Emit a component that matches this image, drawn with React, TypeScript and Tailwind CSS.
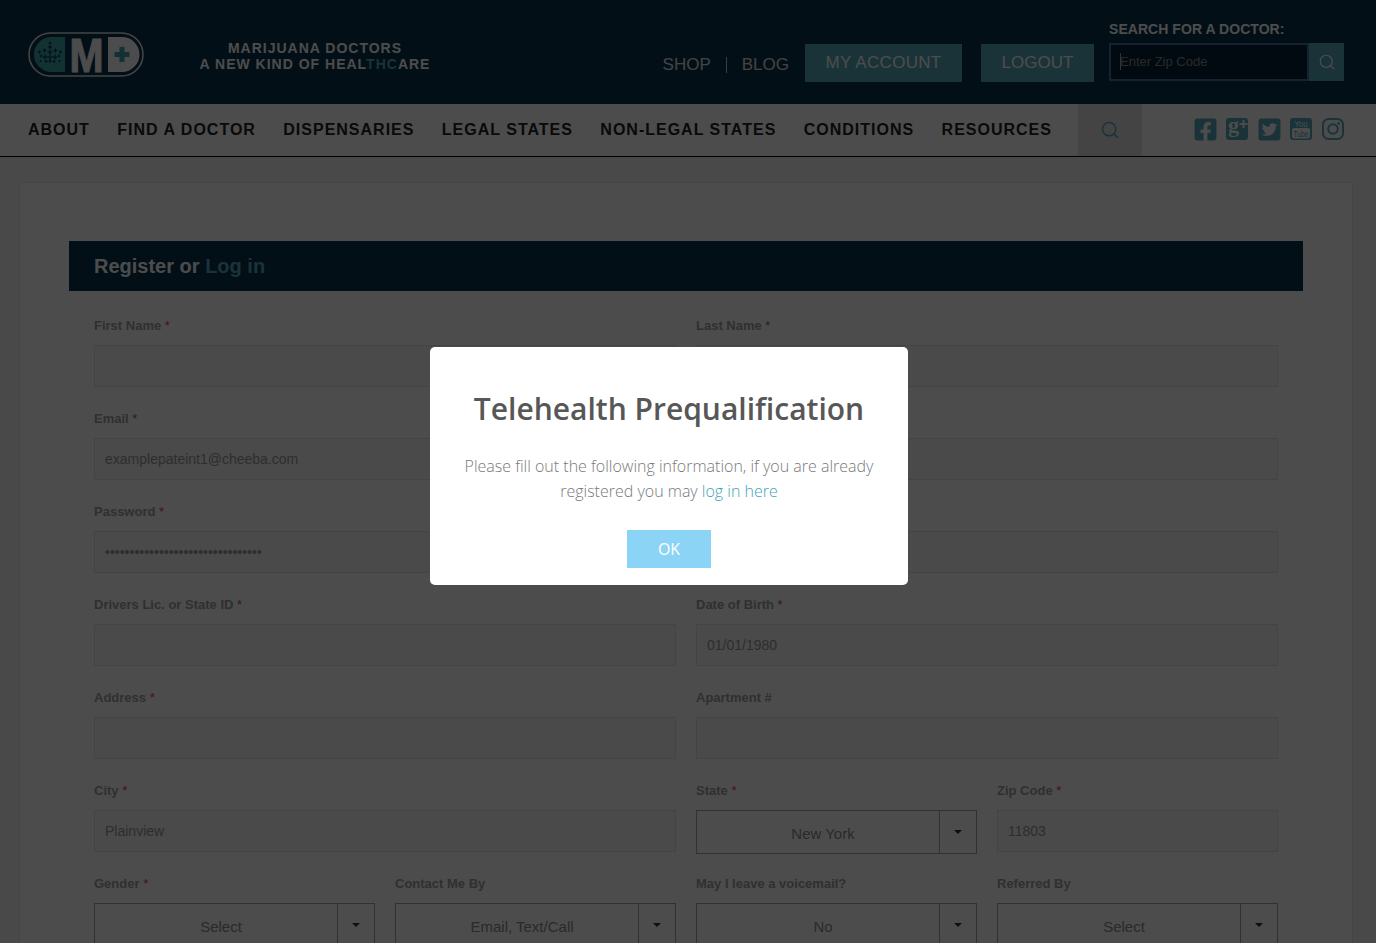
import React from 'react';
import { FaFacebookSquare, FaTwitterSquare } from 'react-icons/fa';
import { Search } from 'lucide-react';

const navItems = ['ABOUT', 'FIND A DOCTOR', 'DISPENSARIES', 'LEGAL STATES', 'NON-LEGAL STATES', 'CONDITIONS', 'RESOURCES'];

// little crosses that make up the leaf in the logo
const leafMarks = [
    [22, 11, 1.5], [22, 15, 2], [22, 20, 2.5], [22, 25, 3], [22, 29, 1.5],
    [16.5, 18.5, 2], [27.5, 18.5, 2], [17, 25, 2.5], [27, 25, 2.5],
    [11.5, 20, 1.5], [32.5, 20, 1.5], [13, 24, 1.5], [31, 24, 1.5],
    [12.5, 29, 1], [18, 29.5, 1.5], [26, 29.5, 1.5], [31.5, 29, 1],
];

const Logo = () => (
    <svg width="116" height="45" viewBox="0 0 116 45" className="shrink-0">
        <rect x="1" y="1" width="114" height="43" rx="21.5" fill="none" stroke="#e6e6e6" strokeWidth="1.6" />
        <path d="M37 5H23.5a17.5 17.5 0 0 0 0 35H37z" fill="#3fa3a8" />
        <g stroke="#07324d" strokeWidth="1.1" fill="none">
            {leafMarks.map(([x, y, r]) => (
                <path key={`${x}-${y}`} d={`M${x - r} ${y}h${r * 2}M${x} ${y - r}v${r * 2}`} />
            ))}
        </g>
        <text x="58.5" y="40" textAnchor="middle" fontFamily="'Liberation Sans', sans-serif" fontWeight="700" fontSize="49" textLength="34" lengthAdjust="spacingAndGlyphs" fill="#ffffff" stroke="#ffffff" strokeWidth="1.2">M</text>
        <path d="M80 5h14a17.5 17.5 0 0 1 0 35H80z" fill="#ffffff" />
        <path d="M94 15v15M86.5 22.5h15" stroke="#3fa3a8" strokeWidth="5" />
    </svg>
);

const GooglePlusIcon = () => (
    <svg width="22" height="22" viewBox="0 0 22 22">
        <rect width="22" height="22" rx="3" fill="#57aabe" />
        <text x="7.5" y="14" textAnchor="middle" fontFamily="'Liberation Serif', serif" fontWeight="700" fontSize="22" fill="#ffffff">g</text>
        <path d="M17.5 2v8M13.5 6h8" stroke="#ffffff" strokeWidth="1.8" />
    </svg>
);

const YoutubeIcon = () => (
    <svg width="22" height="22" viewBox="0 0 22 22">
        <rect width="22" height="22" rx="3" fill="#57aabe" />
        <text x="11" y="8.5" textAnchor="middle" fontFamily="'Liberation Sans', sans-serif" fontSize="9" textLength="13" lengthAdjust="spacingAndGlyphs" fill="#ffffff">You</text>
        <rect x="2" y="10" width="18" height="10.5" rx="2" fill="#ffffff" />
        <text x="11" y="18.5" textAnchor="middle" fontFamily="'Liberation Sans', sans-serif" fontSize="9.5" textLength="15" lengthAdjust="spacingAndGlyphs" fill="#57aabe">Tube</text>
    </svg>
);

const InstagramIcon = () => (
    <svg width="22" height="22" viewBox="0 0 22 22" fill="none" stroke="#57aabe" strokeWidth="2">
        <rect x="1" y="1" width="20" height="20" rx="5.5" />
        <circle cx="11" cy="11" r="4.8" />
        <circle cx="16.6" cy="5.4" r="1.3" fill="#57aabe" stroke="none" />
    </svg>
);

const Label = ({ text, required }: { text?: string; required?: boolean }) => (
    <label className="block h-[20px] text-[13px] leading-[22px] font-bold text-[#a0a0a0] whitespace-nowrap">
        {text}
        {required && <span className="text-[#d04a4a] font-normal"> *</span>}
    </label>
);

const Field = ({ label, required, value, span }: { label?: string; required?: boolean; value?: string; span?: boolean }) => (
    <div className={span ? 'col-span-2' : ''}>
        <Label text={label} required={required} />
        <input
            readOnly
            value={value ?? ''}
            className="mt-[10px] block w-full h-[42px] px-[10px] bg-[#f7f7f7] border border-[#e4e4e4] text-[14px] text-[#999999] outline-none"
        />
    </div>
);

const SelectField = ({ label, required, value }: { label: string; required?: boolean; value: string }) => (
    <div>
        <Label text={label} required={required} />
        <div className="mt-[10px] -mb-[2px] flex h-[44px] border border-[#a6a6a6] text-[15px] text-[#8c8c8c]">
            <div className="flex-1 flex items-center justify-center pl-[10px] pt-[4px]">{value}</div>
            <div className="w-[37px] border-l border-[#a6a6a6] flex items-center justify-center">
                <span className="w-0 h-0 border-x-[4px] border-x-transparent border-t-[4px] border-t-[#333333]" />
            </div>
        </div>
    </div>
);

export default function App() {
    return (
        <div className="h-[943px] overflow-hidden bg-[#f4f4f4] font-['Liberation_Sans',Arial,sans-serif]">
            {/* top bar */}
            <header className="h-[104px] bg-[#07324d] flex pl-[28px] pr-[32px]">
                <div className="pt-[32px]">
                    <Logo />
                </div>
                <div className="w-[234px] ml-[54px] pt-[40px] text-center text-[14px] leading-[16px] font-bold tracking-[1px] text-white whitespace-nowrap">
                    <div>MARIJUANA DOCTORS</div>
                    <div>A NEW KIND OF HEAL<span className="text-[#57aabe]">THC</span>ARE</div>
                </div>
                <div className="ml-auto flex items-end pb-[22px] text-white">
                    <div className="flex items-center h-[38px] text-[17px] text-[#e0e0e0] pt-[4px]">
                        <a>SHOP</a>
                        <span className="mx-[15px] w-px h-[16px] bg-[#cccccc]" />
                        <a>BLOG</a>
                    </div>
                    <a className="ml-[16px] h-[38px] w-[157px] flex items-center justify-center bg-[#57aabe] text-[17px] tracking-[0.3px]">MY ACCOUNT</a>
                    <a className="ml-[19px] h-[38px] w-[113px] flex items-center justify-center bg-[#57aabe] text-[17px]">LOGOUT</a>
                    <div className="ml-[15px] mb-[1px] w-[235px]">
                        <div className="text-[14px] leading-[16px] font-bold tracking-[0.05px] text-white whitespace-nowrap mb-[6px]">SEARCH FOR A DOCTOR:</div>
                        <div className="flex h-[38px]">
                            <div className="relative w-[200px] border-2 border-[#4a6fa5] bg-[#04243a] rounded-[1px]">
                                <input
                                    readOnly
                                    placeholder="Enter Zip Code"
                                    className="w-full h-full pl-[9px] pb-[2px] text-[13px] bg-transparent outline-none placeholder:text-[#8a8a8a]"
                                />
                                <span className="absolute left-[9px] top-[8px] w-px h-[17px] bg-[#aaaaaa]" />
                            </div>
                            <button className="w-[35px] bg-[#57aabe] flex items-center justify-center">
                                <Search size={18} strokeWidth={1.5} className="text-white" />
                            </button>
                        </div>
                    </div>
                </div>
            </header>

            {/* main nav */}
            <nav className="h-[53px] bg-white border-b border-black flex items-stretch pl-[28px] pr-[32px]">
                <div className="flex items-center gap-[27.4px] text-[16px] font-bold tracking-[1px] text-[#222222] whitespace-nowrap pb-[1px]">
                    {navItems.map((item) => (
                        <a key={item}>{item}</a>
                    ))}
                </div>
                <div className="ml-auto flex">
                    <div className="w-[64px] bg-[#e4e4e4] flex items-center justify-center mr-[52px]">
                        <Search size={20} strokeWidth={1.8} className="text-[#57aabe]" />
                    </div>
                    <div className="flex items-center gap-[10px] pb-[2px] text-[#57aabe]">
                        <FaFacebookSquare className="w-[25px] h-[25px] -mx-[1.5px]" />
                        <GooglePlusIcon />
                        <FaTwitterSquare className="w-[25px] h-[25px] -mx-[1.5px]" />
                        <YoutubeIcon />
                        <InstagramIcon />
                    </div>
                </div>
            </nav>

            {/* register form */}
            <main className="pl-[19px] pr-[23px] pt-[25px]">
                <div className="bg-white border border-[#e8e8e8] px-[49px] pt-[58px] h-[800px]">
                    <div className="h-[50px] bg-[#07324d] flex items-center px-[25px] text-[20px] font-bold text-white">
                        <span>Register or <span className="text-[#57aabe]">Log in</span></span>
                    </div>
                    <div className="mt-[24px] px-[25px] grid grid-cols-4 gap-x-[20px] gap-y-[21px]">
                        <Field span label="First Name" required />
                        <Field span label="Last Name" required />
                        <Field span label="Email" required value="examplepateint1@cheeba.com" />
                        <Field span />
                        <Field span label="Password" required value="••••••••••••••••••••••••••••••••" />
                        <Field span />
                        <Field span label="Drivers Lic. or State ID" required />
                        <Field span label="Date of Birth" required value="01/01/1980" />
                        <Field span label="Address" required />
                        <Field span label="Apartment #" />
                        <Field span label="City" required value="Plainview" />
                        <SelectField label="State" required value="New York" />
                        <Field label="Zip Code" required value="11803" />
                        <SelectField label="Gender" required value="Select" />
                        <SelectField label="Contact Me By" value="Email, Text/Call" />
                        <SelectField label="May I leave a voicemail?" value="No" />
                        <SelectField label="Referred By" value="Select" />
                    </div>
                </div>
            </main>

            {/* popup */}
            <div className="fixed inset-0 bg-black/70 flex items-start justify-center">
                <div className="mt-[347px] mr-[38px] w-[478px] h-[238px] bg-white rounded-[5px] text-center font-['Open_Sans',sans-serif] px-[17px] pt-[42px]">
                    <h2 className="text-[30px] leading-[40px] font-semibold text-[#575757]">Telehealth Prequalification</h2>
                    <p className="mt-[25px] text-[16px] leading-[25px] font-light text-[#797979]">
                        Please fill out the following information, if you are already registered you may <a className="text-[#3fa3b8]">log in here</a>
                    </p>
                    <button className="mt-[26px] w-[84px] h-[38px] bg-[#8cd4f5] text-white text-[16px] font-medium">OK</button>
                </div>
            </div>
        </div>
    );
}
